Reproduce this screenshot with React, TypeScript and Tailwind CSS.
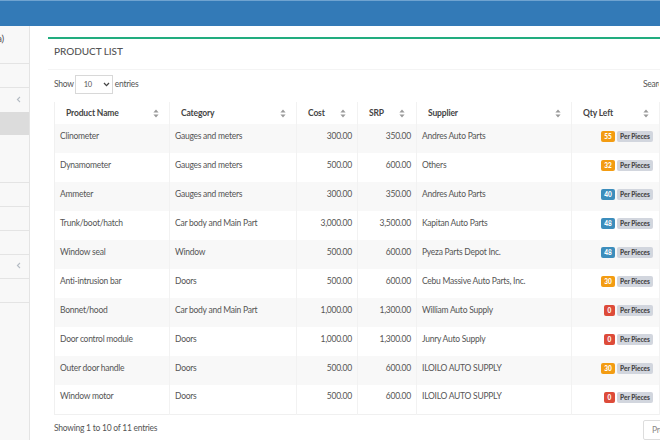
import React from "react";

const rows = [
  ["Clinometer", "Gauges and meters", "300.00", "350.00", "Andres Auto Parts", "55", "o"],
  ["Dynamometer", "Gauges and meters", "500.00", "600.00", "Others", "32", "o"],
  ["Ammeter", "Gauges and meters", "300.00", "350.00", "Andres Auto Parts", "40", "b"],
  ["Trunk/boot/hatch", "Car body and Main Part", "3,000.00", "3,500.00", "Kapitan Auto Parts", "48", "b"],
  ["Window seal", "Window", "500.00", "600.00", "Pyeza Parts Depot Inc.", "48", "b"],
  ["Anti-intrusion bar", "Doors", "500.00", "600.00", "Cebu Massive Auto Parts, Inc.", "30", "o"],
  ["Bonnet/hood", "Car body and Main Part", "1,000.00", "1,300.00", "William Auto Supply", "0", "r"],
  ["Door control module", "Doors", "1,000.00", "1,300.00", "Junry Auto Supply", "0", "r"],
  ["Outer door handle", "Doors", "500.00", "600.00", "ILOILO AUTO SUPPLY", "30", "o"],
  ["Window motor", "Doors", "500.00", "600.00", "ILOILO AUTO SUPPLY", "0", "r"],
];

const badgeClass: Record<string, string> = {
  o: "bg-[#f39c12] w-[14px]",
  b: "bg-[#3c8dbc] w-[14px]",
  r: "bg-[#dd4b39] w-[11px]",
};

function Sort() {
  return (
    <svg width="6" height="9" viewBox="0 0 6 9" className="shrink-0">
      <path d="M3 0.5 L5.6 3.6 H0.4 Z M3 8.5 L0.4 5.4 H5.6 Z" fill="#9a9a9a" />
    </svg>
  );
}

function Chevron() {
  return (
    <svg width="5" height="7" viewBox="0 0 5 7">
      <path d="M4 1 L1.4 3.5 L4 6" fill="none" stroke="#b5bcc4" strokeWidth="1.1" />
    </svg>
  );
}

function Head({ label, w, pad }: { label: string; w: string; pad: string }) {
  return (
    <th className={`${w} ${pad} h-[22px] border-r border-[#f2f2f2] text-left font-bold tracking-[-0.15px]`}>
      <div className="flex items-center justify-between">
        <span>{label}</span>
        <Sort />
      </div>
    </th>
  );
}

export default function App() {
  return (
    <div className="w-[660px] h-[440px] overflow-hidden bg-white flex flex-col font-['Lato','Liberation_Sans',sans-serif] text-[8.5px] tracking-[-0.25px] text-[#555]">
      <div className="h-[26px] shrink-0 bg-[#337ab7] border-t border-[#6fa3d0]" />
      <div className="flex flex-1 min-h-0">
        <aside className="w-[30px] shrink-0 bg-[#f8f8f8] border-r border-[#e4e4e4] flex flex-col overflow-hidden">
          <div className="h-[38px] border-b border-[#e4e4e4] pt-[5px] flex justify-end pr-[25px] text-[10px] whitespace-nowrap">a)</div>
          <div className="h-[24px] border-b border-[#e4e4e4]" />
          <div className="h-[24px] flex items-center justify-end pr-[8px] pb-[2px]"><Chevron /></div>
          <div className="h-[23px] bg-[#dcdcdc]" />
          <div className="h-[48px] border-b border-[#e4e4e4]" />
          <div className="h-[24px] border-b border-[#e4e4e4]" />
          <div className="h-[24px] border-b border-[#e4e4e4]" />
          <div className="h-[24px] border-b border-[#e4e4e4]" />
          <div className="h-[24px] border-b border-[#e4e4e4] flex items-center justify-end pr-[8px] pb-[3px]"><Chevron /></div>
          <div className="h-[24px] border-b border-[#e4e4e4]" />
        </aside>
        <main className="flex-1 min-w-0 pl-[18px] pt-[11px] overflow-hidden">
          <section className="w-[620px] border-t-2 border-[#22ad7f]">
            <div className="h-[31px] border-b border-[#f4f4f4] pl-[6px] pb-[5px] flex items-center text-[10px] font-medium text-[#555] tracking-[-0.05px]">
              PRODUCT LIST
            </div>
            <div className="pl-[6px]">
              <div className="h-[32px] pb-[3px] flex items-center w-[605px] justify-between">
                <div className="flex items-center">
                  <span>Show</span>
                  <div className="ml-[1px] mr-[2px] w-[38px] h-[19px] border border-[#d8d8d8] flex items-center justify-between pl-[8px] pr-[2px] text-[7.5px]">
                    <span>10</span>
                    <svg width="7" height="5" viewBox="0 0 7 5">
                      <path d="M1 1 L3.5 3.6 L6 1" fill="none" stroke="#444" strokeWidth="1.3" />
                    </svg>
                  </div>
                  <span>entries</span>
                </div>
                <span className="w-[16px] overflow-hidden whitespace-nowrap">Search:</span>
              </div>
              <table className="w-[605px] table-fixed border-collapse border-b border-[#f0f0f0] border-l">
                <thead className="text-[#444]">
                  <tr>
                    <Head label="Product Name" w="w-[115px]" pad="pl-[11px] pr-[10px]" />
                    <Head label="Category" w="w-[127px]" pad="pl-[11px] pr-[10px]" />
                    <Head label="Cost" w="w-[61px]" pad="pl-[11px] pr-[11px]" />
                    <Head label="SRP" w="w-[59px]" pad="pl-[11px] pr-[11px]" />
                    <Head label="Supplier" w="w-[155px]" pad="pl-[11px] pr-[10px]" />
                    <Head label="Qty Left" w="w-[88px]" pad="pl-[11px] pr-[10px]" />
                  </tr>
                </thead>
                <tbody>
                  {rows.map((r, i) => (
                    <tr key={r[0]} className={i % 2 === 0 ? "bg-[#f8f8f8]" : "bg-white"}>
                      <td className="h-[29px] pl-[5px] pb-[5px] border-r border-[#f2f2f2]">{r[0]}</td>
                      <td className="pl-[5px] pb-[5px] border-r border-[#f2f2f2]">{r[1]}</td>
                      <td className="pr-[5px] pb-[5px] text-right border-r border-[#f2f2f2]">{r[2]}</td>
                      <td className="pr-[5px] pb-[5px] text-right border-r border-[#f2f2f2]">{r[3]}</td>
                      <td className="pl-[5px] pb-[5px] border-r border-[#f2f2f2]">{r[4]}</td>
                      <td className="pr-[6px] pb-[4px] border-r border-[#f2f2f2]">
                        <div className="flex justify-end gap-[2px] text-[6.5px] font-black tracking-normal leading-[11px]">
                          <span className={`${badgeClass[r[6]]} h-[11px] rounded-[2px] text-white text-center`}>{r[5]}</span>
                          <span className="w-[36px] h-[11px] rounded-[2px] bg-[#d2d6de] text-[#444] text-center">Per Pieces</span>
                        </div>
                      </td>
                    </tr>
                  ))}
                </tbody>
              </table>
              <div className="w-[629px] flex justify-between items-start pt-[5px]">
                <span className="pt-[2px]">Showing 1 to 10 of 11 entries</span>
                <div className="w-[40px] h-[20px] border border-[#dddddd] rounded-[2px] pl-[8px] leading-[18px] text-[#888] overflow-hidden whitespace-nowrap">Previous</div>
              </div>
            </div>
          </section>
        </main>
      </div>
    </div>
  );
}
